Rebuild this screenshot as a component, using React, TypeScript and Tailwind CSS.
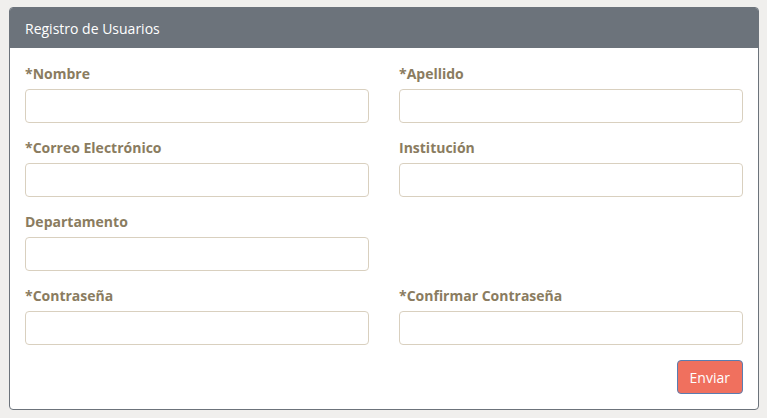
import React from 'react';

type Field = { id: string; label: string; type?: string };

const rows: (Field | null)[][] = [
  [{ id: 'nombre', label: '*Nombre' }, { id: 'apellido', label: '*Apellido' }],
  [{ id: 'correo', label: '*Correo Electrónico', type: 'email' }, { id: 'institucion', label: 'Institución' }],
  [{ id: 'departamento', label: 'Departamento' }, null],
  [
    { id: 'password', label: '*Contraseña', type: 'password' },
    { id: 'confirm', label: '*Confirmar Contraseña', type: 'password' },
  ],
];

const FieldBox = ({ field }: { field: Field }) => (
  <div className="flex flex-col">
    <label htmlFor={field.id} className="h-5 text-[14px] leading-5 font-bold text-[#8a7c60]">
      {field.label}
    </label>
    <input
      id={field.id}
      type={field.type ?? 'text'}
      className="mt-[5px] h-[34px] w-full rounded-[4px] border border-[#d9d0bf] bg-white px-3 outline-none"
    />
  </div>
);

const App: React.FC = () => {
  return (
    <div
      className="min-h-[418px] w-full bg-[#f0efed] pt-[7px] pl-[9px] pr-[8px]"
      style={{ fontFamily: '"Open Sans", "Liberation Sans", sans-serif' }}
    >
      <div className="overflow-hidden rounded-[4px] border border-[#6c737b] bg-white">
        <div className="flex h-[40px] items-center bg-[#6c737b] px-[15px] text-[14px] text-white">
          Registro de Usuarios
        </div>
        <form className="flex flex-col px-[15px] pt-[16px] pb-[15px]" onSubmit={(e) => e.preventDefault()}>
          {rows.map((row, i) => (
            <div key={i} className="mb-[15px] grid grid-cols-2 gap-x-[30px]">
              {row.map((f, j) => (f ? <FieldBox key={f.id} field={f} /> : <div key={j} />))}
            </div>
          ))}
          <div className="flex justify-end">
            <button
              type="submit"
              className="h-[34px] rounded-[4px] border border-[#5a7db0] bg-[#f0705e] px-3 text-[14px] text-white"
            >
              Enviar
            </button>
          </div>
        </form>
      </div>
    </div>
  );
};

export default App;
